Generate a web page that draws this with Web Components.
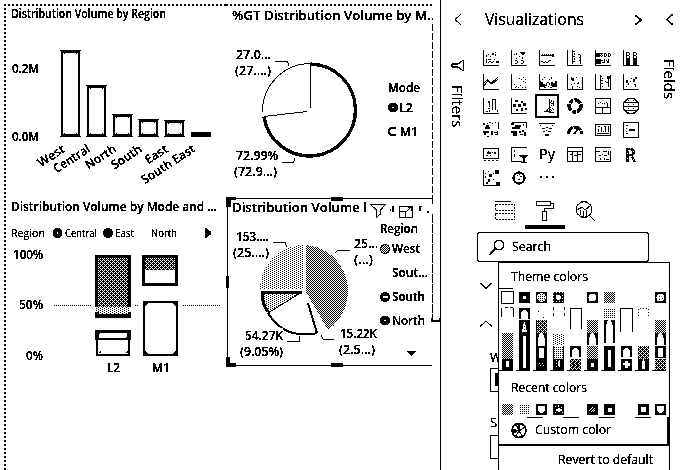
<!DOCTYPE html>
<html lang="en"><head><meta charset="utf-8"><title>Report editor</title>
<style>html,body{margin:0;width:681px;height:470px;overflow:hidden;background:#fff}</style></head>
<body><report-editor></report-editor>
<script>
const FONT = '"Open Sans","Noto Sans",sans-serif';
const T = (x, y, s, w, size = 12, weight = 600, extra = '') =>
  `<text x="${x}" y="${y}" font-size="${size}" font-weight="${weight}" ${w ? `textLength="${w}" lengthAdjust="spacingAndGlyphs"` : ''} ${extra}>${s}</text>`;
const PATTERNS = `<defs>
<pattern id="chk" width="2" height="2" patternUnits="userSpaceOnUse"><path d="M0 0h1v1H0zM1 1h1v1H1z" fill="#000"/></pattern>
<pattern id="dense" width="4" height="4" patternUnits="userSpaceOnUse"><rect width="4" height="4"/><path d="M0 0h1v1H0zM2 0h1v1H2zM1 1h1v1H1zM0 2h1v1H0zM2 2h1v1H2zM3 3h1v1H3z" fill="#fff"/></pattern>
<pattern id="lite" width="4" height="4" patternUnits="userSpaceOnUse"><path d="M0 0h1v1H0zM2 1h1v1H2zM0 2h1v1H0zM2 3h1v1H2z" fill="#000"/></pattern>
<pattern id="dots" width="2" height="2" patternUnits="userSpaceOnUse"><path d="M1 1h1v1H1z" fill="#000"/></pattern>
<pattern id="wdots" width="3" height="3" patternUnits="userSpaceOnUse"><rect width="3" height="3"/><path d="M1 1h1v1H1z" fill="#fff"/></pattern>
</defs>`;
class Base extends HTMLElement {
  constructor(){ super(); this.attachShadow({mode:'open'}); }
  connectedCallback(){ this.shadowRoot.innerHTML = `<style>*{box-sizing:border-box}svg{display:block;font-family:${FONT}}${this.css()}</style>${this.html()}`; }
  css(){ return ':host{display:block}'; }
}
class Tile extends Base {
  css(){ return ':host{display:block;overflow:hidden}'; }
  html(){ const [x,y,w,h] = this.box(); return `<svg width="${w}" height="${h}" viewBox="${x} ${y} ${w} ${h}" shape-rendering="crispEdges">${PATTERNS}${this.draw()}</svg>`; }
}
customElements.define('region-columns', class extends Tile {
  box(){ return [0,0,226,195]; }
  draw(){
    const bars = [[61,50],[87,85],[113,114],[139,119],[165,120]].map(([x,y]) => `<path d="M${x+1} ${y+1}H${x+18}V136H${x+1}z" fill="none" stroke="#000" stroke-width="2"/><path d="M${x-1} ${y}h21v1h-21zM${x-1} 136h21v1h-21zM${x+2} ${y+2}h15v1h-1v1h-1v-1h-11v1h-1v-1h-1zM${x+2} 135h15v-1h-1v-1h-1v1h-11v-1h-1v1h-1z"/>`).join('');
    const names = [['West',66,30],['Central',91,41],['North',117,34],['South',143,34],['East',169,25],['South East',196,61]]
      .map(([s,x,w]) => T(x,151,s,w,12,600,`text-anchor="end" transform="rotate(-33 ${x} 151)"`)).join('');
    return `<path d="M4 5H226" stroke="#000" stroke-width="2" stroke-dasharray="2 2"/><path d="M5 4V195" stroke="#000" stroke-width="2" stroke-dasharray="2 2"/>`
      + T(11,18,'Distribution Volume by Region',155,12) + T(12,73,'0.2M',27,12.5) + T(12,141,'0.0M',27,12.5)
      + bars + '<rect x="191" y="132" width="20" height="5"/>' + names;
  }
});
customElements.define('mode-pie', class extends Tile {
  box(){ return [226,0,214,195]; }
  draw(){ return `<clipPath id="c"><path d="M226 0h207v200h-207z"/></clipPath><path d="M226 5H432" stroke="#000" stroke-width="2" stroke-dasharray="2 2"/>
  <g clip-path="url(#c)">${T(232,20,'%GT Distribution Volume by M...',206,13)}</g>
  <path d="M432.5 24V195" stroke="#000" stroke-dasharray="7 2"/>
  <g fill="none" stroke="#000"><path d="M310.5 64A46 46 0 1 1 264 117" stroke-width="3" shape-rendering="auto"/><path d="M262.500 112A48 48 0 0 1 310 63.500"/>
  <path d="M310.500 63V108M264 116.500L307 111.500"/><path d="M275 61.500H287.500L289 66M282 162.500H293.500L295 158"/></g>`
  + T(236,59,'27.0...',35) + T(235,75,'(27....)',36) + T(236,160,'72.99%',42) + T(234,176,'(72.9...)',43)
  + T(388,92,'Mode',32,12) + T(399,112,'L2',14) + T(400,136,'M1',18)
  + '<circle cx="393" cy="107.500" r="3" fill="#fff" stroke="#000" stroke-width="4"/><path d="M396 128H391L389 130V133L391 135H396" fill="none" stroke="#000" stroke-width="1.500"/>'; }
});
customElements.define('mode-stack', class extends Tile {
  box(){ return [0,195,226,275]; }
  draw(){ return `<path d="M5 196V470" stroke="#000" stroke-width="2" stroke-dasharray="2 2"/>`
  + T(11,211,'Distribution Volume by Mode and ...',206,12.500)
  + T(11,237,'Region',34,11.500,400) + T(65,237,'Central',32,11.500,400) + T(115,237,'East',19,11.500,400) + T(151,237,'North',26,11.500,400)
  + T(13,259,'100%',30) + T(19,309,'50%',24) + T(26,360,'0%',17)
  + T(107,372,'L2',13) + T(152,372,'M1',18)
  + `<circle cx="57.500" cy="233" r="3" fill="#fff" stroke="#000" stroke-width="4"/><circle cx="108" cy="233" r="5"/><path d="M205 228h2l2 3h2v4h-2l-2 3h-2z"/>
  <path d="M54 305.500H91M135 305.500H138M183 305.500H220" stroke="#000" stroke-dasharray="1 1"/>
  <path d="M95 255H131V307H95z"/><path d="M98 258H128V307H98z" fill="url(#dense)"/><path d="M96 307H130V314H96z" fill="url(#lite)"/><path d="M95 312h4v2h29v-2h3v6H95z"/>
  <path d="M95 330H131V340H95z"/><rect x="99" y="333" width="28" height="5" rx="2" fill="#fff"/><path d="M97 340V354.500H129V340" fill="none" stroke="#000" stroke-width="2"/><path d="M98 353h3v-3zM128 353h-3l3-3z"/>
  <path d="M142 255H178V286H142z"/><path d="M145 258H175V283H145z" fill="#fff"/><path d="M145 258H175V270H145z" fill="url(#dense)"/>
  <path d="M143.500 302H176.500V354.500H143.500z" fill="none" stroke="#000" stroke-width="2"/><path d="M144 303h4l-4 4zM176 303h-4l4 4zM144 354h4l-4-4zM176 354h-4l4-4z"/>`; }
});
customElements.define('region-pie', class extends Tile {
  box(){ return [226,195,214,275]; }
  draw(){ return `<path d="M432 198.500H227.500V365.500H432" fill="none" stroke="#000"/>
  <path d="M226 197h10v3h-5v7h-5zM331 197h12v4h-12zM226 276h3v12h-3zM226 357h4v6h6v4h-10zM331 363h12v4h-12z"/>
  <path d="M432.500 195V204M432.500 214V320" fill="none" stroke="#000" stroke-dasharray="9 1"/><path d="M432 318v3h8v-3" fill="none" stroke="#000" stroke-width="2"/>`
  + T(232,212,'Distribution Volume l',135,12.500)
  + `<path d="M370.500 204.500H385.500L380.500 210V214L376.500 217V210z" fill="none" stroke="#000"/><path d="M392 206h2v6h-2zM390 209h1v2h-1z"/>
  <path d="M399.500 212V206.500H412.500V217.500H399.500V211.500H405.500V217M406 212L411 207M408 207.500H411.500V211" fill="none" stroke="#000"/><path d="M419 206h3v1h-1v4h-2zM427 211h2v2h-2z"/>
  <path d="M306 292V245A45 46.500 0 0 1 328 330z" fill="url(#chk)"/><path d="M303 289V245A43 45 0 0 0 260 289z" fill="url(#lite)"/>
  <path d="M302 292H261.500Q262 304 268 313z" fill="url(#lite)"/>
  <path d="M302 292.500H262Q262 304 268 312" fill="none" stroke="#000" stroke-width="3"/><path d="M302 292L268 313" stroke="#000"/>
  <path d="M268 313Q281 334 302 334Q311 335 317 333" fill="none" stroke="#000" stroke-width="2"/><path d="M308 303L317 333" stroke="#000" stroke-width="2"/>
  <path d="M273 242.500H285.500L286.500 247M335 252.500L338 250.500H350M287 341.500H299.500V336M321 335L323.500 339.500H334" fill="none" stroke="#000"/>`
  + T(236,241,'153....',33) + T(233,257,'(25....)',36) + T(354,248,'25...',24) + T(354,264,'(...)',19)
  + `<path d="M245 328h38v8h-38z" fill="#fff"/>` + T(245,340,'54.27K',38) + T(240,356,'(9.05%)',43) + T(340,338,'15.22K',37) + T(339,354,'(2.5...)',36)
  + T(380,233,'Region',38) + T(392,253,'West',28) + T(392,277,'Sout...',36) + T(392,301,'South',33) + T(392,325,'North',33)
  + `<circle cx="385" cy="249" r="4.500" fill="url(#chk)" stroke="#000"/><circle cx="385" cy="297" r="5"/><path d="M383 296h5v2h-5z" fill="#fff"/><circle cx="385" cy="320.500" r="3" fill="#fff" stroke="#000" stroke-width="4"/><path d="M407 351H416L411.500 356z"/>`; }
});
customElements.define('report-canvas', class extends Base {
  css(){ return ':host{display:grid;grid-template:195px 275px/226px 214px;width:441px;border-right:1px solid #000}'; }
  html(){ return '<region-columns></region-columns><mode-pie></mode-pie><mode-stack></mode-stack><region-pie></region-pie>'; }
});
/* A single-line label with a fixed advance width. */
customElements.define('fit-label', class extends Base {
  html(){ const g = n => +this.getAttribute(n); const s = this.getAttribute('size') || 13; const h = g('h') || 18;
    return `<svg width="${g('w')}" height="${h}" overflow="visible">${T(0,h-5,this.getAttribute('text'),g('w'),s,this.getAttribute('weight')||400)}</svg>`; }
});
customElements.define('ui-icon', class extends Base {
  html(){ const w=this.getAttribute('w'),h=this.getAttribute('h'); return `<svg width="${w}" height="${h}" fill="none" stroke="#000" stroke-width="${this.getAttribute('s')||1}"><path d="${this.getAttribute('d')}"/></svg>`; }
});
customElements.define('side-rail', class extends Base {
  css(){ return `:host{display:flex;flex-direction:column;align-items:center;padding-top:13px;width:33px}
  .v{writing-mode:vertical-rl;font:400 15px ${FONT};line-height:18px}ui-icon{height:13px}.gap{height:33px}`; }
  html(){ return `<ui-icon w="8" h="13" s="${this.getAttribute('s')||1}" d="M7 1L1 6.500L7 12"></ui-icon><div class="gap"></div><slot></slot><div class="v">${this.getAttribute('label')}</div>`; }
});
const AX = 'M.5 0V15.5H16';
/* Each entry: [stroked path, filled path]. */
const ICONS = [
 [AX,'M3 5h1v2H3zM5 4h1v1H5zM9 3h2v2H9zM12 4h1v2h-1zM7 6h1v1H7zM3 9h1v4H3zM5 9h3v1H5zM6 11h2v1H6zM8 12h2v1H8zM11 9h1v1h-1zM13 11h3v2h-3zM5 12h1v1H5zM12 2h1v1h-1zM10 11h1v1h-1z'],
 [AX,'M3 4h1v1H3zM5 3h1v2H5zM10 2h4v2h-4zM11 4h2v1h-2zM9 2h1v1H9zM5 8h1v1H5zM4 10h2v1H4zM6 11h1v2H6zM4 13h2v1H4zM11 7h1v2h-1zM10 10h2v1h-2zM12 11h1v2h-1zM10 13h2v1h-2zM8 6h1v1H8z'],
 [AX,'M2 5h11v1H2zM3 4h1v1H3zM5 4h1v1H5zM7 4h1v1H7zM9 4h1v1H9zM11 4h1v1h-1zM13 4h2v3h-2zM2 11h2v1H2zM4 12h2v1H4zM6 11h1v1H6zM7 12h2v1H7zM9 11h1v1H9zM10 10h2v1h-2z'],
 [AX,'M5 0h1v14H5zM6 1h2v1H6zM7 3h1v2H7zM6 6h2v1H6zM7 8h1v2H7zM6 11h2v1H6zM13 5h1v9h-1zM11 4h2v1h-2zM12 7h1v1h-1zM12 10h1v1h-1z'],
 ['M.5 0V15.5H16','M1 3h4v4H1zM6 4h1v1H6zM5 5h1v1H5zM7 5h1v1H7zM6 6h1v1H6zM5 3h3v1H5zM9 3h1v4H9zM9 3h2v1H9zM11 4h1v2h-1zM9 6h2v1H9zM13 3h1v4h-1zM13 3h2v1h-2zM14 6h1v1h-1zM15 4h1v2h-1zM1 9h5v5H1zM6 10h2v1H6zM7 12h2v1H7zM9 9h1v4H9zM11 10h1v1h-1zM12 11h1v2h-1zM13 9h1v4h-1z'],
 [AX,'M3 8h4v7H3zM10 8h4v7h-4zM3 2h3v1H3zM3 3h1v5H3zM6 3h1v2H6zM4 5h2v1H4zM6 6h1v2H6zM10 2h3v1h-3zM10 3h1v5h-1zM13 3h1v2h-1zM11 5h2v1h-2zM13 6h1v2h-1z'],
 ['M.5 0V15.5H16M1 12L5 6.500L8 9.500L15 3M1 9L5 5M9 10L15 5',''],
 [AX,'M8 4h1v1H8zM10 5h1v1h-1zM12 3h1v1h-1zM14 5h1v1h-1zM12 7h1v1h-1zM14 8h1v1h-1zM3 10h1v1H3zM5 12h1v1H5zM7 13h1v1H7zM9 11h1v1H9zM11 13h1v1h-1zM14 13h1v1h-1zM4 13h1v1H4z'],
 ['M.5 0V15.5H18','M0 7h2v1h2v2h2v1h2v1H6v1H0zM3 5h1v1H3zM5 3h1v1H5zM12 3h1v2h-1zM10 5h1v1h-1zM8 8h2v1H8zM7 9h1v2H7zM10 9h1v2h-1zM12 8h2v1h2v-2h2v6h-5v-1h-1zM5 13h2v1H5zM9 12h1v1H9zM11 13h2v1h-2z'],
 ['M.5 0V15.500H15.500V3','M4 3h1v3H4zM5 4h2v3H5zM9 3h1v1H9zM11 8h1v1h-1zM10 9h2v1h-2zM4 10h1v1H4zM5 12h1v3H5zM10 12h1v1h-1zM12 13h1v1h-1zM7 9h1v1H7z'],
 ['M.5 0V15.500H15.500V1','M5 1h1v14H5zM6 2h1v1H6zM7 4h1v1H7zM6 6h2v1H6zM6 9h2v1H6zM7 12h1v1H7zM10 7h1v1h-1zM11 8h2v1h-2zM13 5h1v8h-1zM12 2h3v3h-3z'],
 [AX,'M3 6h2v3H3zM5 9h1v2H5zM7 7h1v1H7zM8 4h1v1H8zM10 5h2v3h-2zM12 3h2v2h-2zM11 10h2v1h-2zM12 11h1v2h-1zM3 12h1v1H3z'],
 [AX,'M5 3h2v2H5zM6 5h1v4H6zM9 1h4v1H9zM9 2h1v10H9zM12 2h1v10h-1zM5 10h2v1H5zM3 13h2v1H3zM6 12h1v2H6zM14 12h1v2h-1z'],
 [AX,'M4 2h3v2H4zM10 3h2v2h-2zM12 5h3v3h-3zM2 6h3v3H2zM7 6h3v3H7zM5 11h2v2H5zM10 10h2v3h-2zM14 10h2v2h-2z'],
 ['','M10 1h1v14h-1zM12 2h1v2h-1zM11 4h1v1h-1zM13 5h1v1h-1zM12 7h1v1h-1zM11 9h1v1h-1zM13 10h1v1h-1zM12 12h1v1h-1zM14 11h1v1h-1zM8 11h1v2H8zM5 13h7v1H5zM9 10h1v1H9zM14 3h1v5h-1zM12 5h1v1h-1zM11 11h1v1h-1zM7 12h1v1H7zM11 14h4v1h-4z'],
 ['DONUT',''],
 ['M.5.5H15.500V15.500H.5zM0 9.500H16M7.500 9V16','M3 5h1v1H3zM5 4h1v1H5zM7 5h1v1H7zM9 5h1v1H9zM11 4h1v1h-1zM12 5h1v4h-1z'],
 ['M5 .5H11L15.500 5V11L11 15.500H5L.5 11V5zM2 4.500H14M1 8.500H15M2 12.500H14','M5 2h1v1H5zM5 6h1v1H5zM5 10h1v1H5zM10 2h1v1h-1zM10 6h1v1h-1zM10 10h1v1h-1zM5 14h1v1H5zM10 14h1v1h-1z'],
 ['M15.500 0V7','M0 1h2v2H0zM4 1h1v1H4zM6 0h2v1H6zM9 1h1v1H9zM12 0h1v1h-1zM2 5h5v2H2zM3 3h3v2H3zM0 9h6v2H0zM1 11h2v2H1zM8 9h2v4H8zM11 10h3v1h-3zM12 12h3v1h-3zM14 9h1v3h-1zM4 14h2v1H4z'],
 ['M1 .5H16M15.500 0V6','M0 1h3v2H0zM4 3h6v2H4zM1 5h8v2H1zM0 9h6v2H0zM2 11h4v3H2zM8 9h2v2H8zM11 8h2v2h-2zM13 10h2v4h-2zM9 12h3v1H9zM12 2h1v2h-1z'],
 ['M0 1.500H16','M1 3h1v1H1zM13 3h1v1h-1zM3 6h3v1H3zM7 5h2v1H7zM10 6h3v1h-3zM4 9h2v1H4zM7 8h1v1H7zM9 9h3v1H9zM6 12h4v2H6z'],
 ['GAUGE',''],
 ['M.5 2V13.500H15.500V2z','M3 4h2v1H3zM3 7h1v3H3zM6 5h1v5H6zM8 9h1v1H8zM9 4h2v1H9zM10 5h1v5h-1zM13 4h1v6h-1zM2 11h12v1H2z'],
 ['M.5.5H15.500V15.500H.5zM3 3.500h2M3 11.500h2','M6 7h6v2H6zM3 6h1v1H3zM3 9h1v1H3z'],
 ['M.5 2.500H15.500V12.500H.5z','M4 6h4v2H4zM5 5h1v1H5zM9 6h1v1H9zM11 6h2v2h-2zM3 9h2v1H3zM7 9h1v1H7zM1 14h2v1H1zM5 14h2v1H5zM9 14h2v1H9zM13 14h2v1h-2z'],
 ['M.5.5V15.500H11M0 1H16','M3 4h1v2H3zM3 8h1v3H3zM7 9h10v1h-1l-2 2v4h2v1h-6v-1h2v-4l-2-1z'],
 ['PY',''],
 ['M.5.5V15.500H15.500V1M0 1H16M1 5.500H15M5.500 6V15M10.500 6V15','M3 8h2v1H3zM7 9h3v1H7zM11 8h3v1h-3z'],
 ['M.5.5V15.500H15.500V5M0 1H16M1 5.500H5','M8 5h4v1H8zM13 5h1v4h-1zM4 9h2v1H4zM7 8h1v1H7zM9 9h3v1H9zM5 12h1v2H5zM9 12h1v2H9zM11 13h3v1h-3z'],
 ['RR',''],
 ['M.5 0V15.500H13','M2 3h1v1H2zM2 6h1v2H2zM5 1h1v1H5zM12 0h4v4h-4zM6 4h3v3H6zM5 9h2v3H5zM13 12h4v4h-4zM3 12h2v2H3zM10 3h1v1h-1zM10 9h1v1h-1z'],
 ['RING',''],['MORE','']];
const special = {
 DONUT:'<circle cx="8" cy="8" r="6" fill="none" stroke="#000" stroke-width="3.500" stroke-dasharray="7 1 4 1.500"/>',
 GAUGE:'<path d="M1.500 12A6.500 7 0 0 1 14.500 12" fill="none" stroke="#000" stroke-width="3" stroke-dasharray="8 1"/><path d="M7 12L11 7" stroke="#000" stroke-width="2"/>',
 PY:T(0,13,'Py',16,15,400), RR:T(2,16,'R',11,20,600)+'<path d="M5 4h1v1H5zM4 7h1v1H4zM7 2h1v1H7zM10 5h1v1h-1zM8 10h1v1H8zM4 12h1v1H4zM10 13h1v1h-1z" fill="#fff"/>',
 RING:'<circle cx="8" cy="8" r="5.500" fill="none" stroke="#000" stroke-width="2"/><path d="M6 5h1v1H6zM9 6h2v1H9zM7 9h2v1H7zM8 4h1v1H8zM1 7h1v2H1zM14 7h1v2h-1zM7 1h2v1H7zM7 14h2v1H7z"/>',
 MORE:'<path d="M1 6h2v2H1zM7 6h2v2H7zM13 6h2v2h-2z"/>'};
customElements.define('visual-gallery', class extends Base {
  css(){ return ':host{display:grid;grid-template-columns:repeat(6,16px);grid-auto-rows:16px;gap:8px 12px}.sel{outline:2px solid #000;outline-offset:2px}svg{overflow:visible}'; }
  html(){ return ICONS.map(([s,f],i) => `<svg width="16" height="16" class="${i===14?'sel':''}" shape-rendering="crispEdges">${special[s] || `<path d="${s}" fill="none" stroke="#000"/><path d="${f}"/>`}</svg>`).join(''); }
});
customElements.define('pane-tabs', class extends Base {
  css(){ return ':host{display:grid;grid-template-columns:40px 40px 40px;height:31px}div{display:flex;justify-content:center;padding-top:3px}.on{border-bottom:4px solid #000}'; }
  html(){ return `<div><svg width="20" height="20" fill="none" stroke="#000" shape-rendering="crispEdges"><path d="M0 .5H16"/><path d="M.5 3.500H19.500V9.500H.5zM.5 12.500H19.500V18.500H.5z" stroke-dasharray="2 1"/></svg></div>
  <div class="on"><svg width="19" height="21" fill="none" stroke="#000" shape-rendering="crispEdges"><path d="M.5.500H14.500V4.500H.500zM15 2.500H17.500V7.500H8.500V10M6.500 10.500H10.500V19.500H6.500z"/></svg></div>
  <div><svg width="21" height="21" fill="none" stroke="#000"><circle cx="9" cy="8.500" r="7.800"/><path d="M2 9L7 6L10 9L16 4M5.500 9V14M8.500 10V16M11.500 9V15M14 14L20 20"/></svg></div>`; }
});
const F = {c:'url(#chk)',d:'url(#dense)',l:'url(#lite)',o:'url(#dots)',w:'url(#wdots)'};
customElements.define('theme-swatches', class extends Base {
  html(){
    const r=(x,y,w,h,f)=>`<rect x="${x}" y="${y}" width="${w}" height="${h}" fill="${f}"/>`;
    let s='';
    s+='<path d="M.5.500h12v12H.500z" fill="none" stroke="#000"/>';
    const ring=(i,k)=>{ s+=r(i*17+1,1,11,11,'#000')+k; };
    ring(1,r(22,5,3,3,'#fff')); ring(2,'<circle cx="40.500" cy="6.500" r="4.500" fill="#fff"/><circle cx="40.500" cy="6.500" r="4" fill="url(#dots)"/>');
    ring(3,r(52,1,11,11,'url(#wdots)')+'<circle cx="57.500" cy="6.500" r="2.500" fill="#fff"/>'); ring(5,'<circle cx="91.500" cy="6.500" r="4" fill="#fff"/>');
    s+=r(103,1,11,11,F.c)+'<path d="M105 11L113 3M104 8L110 2" stroke="#fff"/>'; ring(9,'<circle cx="159.500" cy="6.500" r="4" fill="#fff"/><path d="M158 5h1v1h-1zM161 7h1v1h-1zM158 8h1v1h-1z"/>');
    const arch=(x,y,h)=>r(x,y,11,h,'#000')+`<path d="M${x+2} ${y+h}V${y+5}L${x+4} ${y+2}H${x+7}L${x+9} ${y+5}V${y+h}z" fill="#fff"/>`;
    const sides=(x,y,h)=>r(x,y,2,h,'#000')+r(x+9,y,2,h,'#000')+`<path d="M${x+2} ${y}h2l-2 6zM${x+9} ${y}h-2l2 6z"/>`;
    const hole=(x,y,h,w=4)=>r(x,y,11,h,'#000')+`<rect x="${x+5.5-w/2}" y="${y+2}" width="${w}" height="${h-3}" rx="1.500" fill="#fff"/>`;
    s+='<g transform="translate(0 -1)">';
    s+=`<path d="M.5 27V18M12.500 27V18M4 17.500h3M9 17.500h3" stroke="#000"/>`+r(1,43,11,12,F.c)+r(1,55,11,14,F.c)+r(1,69,11,12,'#000')+'<path d="M4 69h5v7L6.500 79L4 76z" fill="url(#lite)"/><path d="M5 71h3v6H5z" fill="#fff"/>';
    s+=arch(18,18,11)+r(18,30,11,51,'#000')+'<path d="M21 42L23 32h1L26 42z" fill="#fff"/><path d="M23 36h1v1h-1zM23 39h1v1h-1z"/>'+r(22,46,3,32,'#fff');
    s+='<path d="M37 21h1v1h-1zM42 27h1v1h-1z"/>'+r(35,30,11,13,F.d)+r(35,30,1,13,'#000')+sides(35,43,13)+hole(35,56,13,5)+r(35,69,11,12,'#000')+'<circle cx="40.500" cy="74.500" r="4" fill="url(#chk)"/><path d="M38 73h1v1h-1zM41 73h1v1h-1zM39 75h1v1h-1zM42 75h1v1h-1z" fill="#fff"/>';
    s+='<path d="M52.500 17v3M52.500 23v3M63.500 17v3M63.500 23v3" stroke="#000"/>'+r(52,44,11,11,F.l)+r(52,56,11,13,F.o)+r(52,56,1,13,'#000')+r(62,56,1,13,'#000')+r(52,69,11,12,'#000')+r(55,69,5,9,F.w)+r(57,71,2,5,'#fff');
    s+='<path d="M69.500 39V18.500H80.500V39" fill="none" stroke="#000"/>'+arch(69,56,11)+r(69,69,11,12,F.d)+r(71,71,6,6,F.l);
    s+=r(86,30,11,13,F.c)+sides(86,43,12)+r(86,56,11,13,F.c)+r(86,69,11,12,'#000')+r(90,73,3,4,'#fff');
    s+=r(103,18,11,11,F.o)+sides(103,30,23)+r(103,56,11,25,'#000')+r(107,60,3,17,'#fff');
    s+='<path d="M119.500 42V18.500H131.500V42" fill="none" stroke="#000"/>'+arch(120,56,11)+r(120,69,11,12,'#000')+'<path d="M124 71h3v2h2v3h-2v2h-3v-3h-2v-2h2z" fill="#fff"/>';
    s+='<path d="M137.500 26V18.500H147.500V26" fill="none" stroke="#000" stroke-dasharray="1 2"/>'+r(137,56,11,13,F.d)+r(137,69,11,12,'#000')+'<path d="M141 79V72L142.500 69L144 72V79z" fill="#fff"/>';
    s+=r(154,30,11,13,F.c)+sides(154,43,12)+hole(154,56,12,5)+r(154,69,11,12,F.d)+'</g>';
    return `<svg width="166" height="82" shape-rendering="crispEdges">${PATTERNS}${s}</svg>`; }
});
customElements.define('recent-swatches', class extends Base {
  html(){ const b=(i,inner)=>`<rect x="${i*17+1}" width="11" height="11"/>${inner}`;
    return `<svg width="166" height="11" shape-rendering="crispEdges">${PATTERNS}<rect x="1" width="11" height="11" fill="url(#chk)"/><rect x="18" width="10" height="11" fill="url(#dots)"/>
    ${b(2,'<path d="M37 2h7v4l-2 3h-3l-2-3z" fill="#fff"/>')}${b(3,'<path d="M54 2h1v1h-1zM57 1h1v2h-1zM60 3h1v1h-1zM55 5h6v2h-6zM57 4h2v4h-2zM54 8h1v1h-1zM61 8h1v1h-1z" fill="#fff"/>')}${b(5,'<path d="M88 7l4-4M90 8l4-4M92 8l2-2" stroke="#fff"/>')}${b(6,'<path d="M107 4h4v4h-4z" fill="#fff"/>')}${b(8,'<circle cx="142.500" cy="5.500" r="2.800" fill="#fff"/>')}${b(9,'<path d="M156 2h7v4l-2 3h-3l-2-3z" fill="#fff"/>')}</svg>`; }
});
customElements.define('color-menu', class extends Base {
  css(){ return `:host{display:flex;flex-direction:column;background:#fff;border:1px solid #000;border-bottom:0;width:172px;height:208px}
  .head{padding:4px 0 0 12px;height:25px}.dash{height:1px;width:14px;background:#000}.sw{padding:2px 0 0 2px;height:81px}
  .recent{padding:7px 0 0 12px;height:34px;background:repeating-linear-gradient(90deg,#000 0 14px,#fff 14px 17px) 0 0/100% 1px no-repeat}
  .row{height:12px;padding-left:2px}
  .custom{display:flex;align-items:center;gap:8px;margin-top:1px;padding-left:12px;height:29px;border-bottom:2px solid #000;border-right:2px solid #000;background:repeating-linear-gradient(90deg,#000 0 16px,#fff 16px 36px) 28px 0/100% 1px no-repeat}
  .revert{display:flex;justify-content:flex-end;padding:5px 16px 0 0}`; }
  html(){ return `<div class="head"><fit-label text="Theme colors" w="77" h="19"></fit-label></div><div class="dash"></div><div class="sw"><theme-swatches></theme-swatches></div>
  <div class="recent"><fit-label text="Recent colors" w="76" h="20"></fit-label></div><div class="row"><recent-swatches></recent-swatches></div>
  <div class="custom"><svg width="16" height="17" fill="none" stroke="#000"><circle cx="8" cy="8.500" r="7" stroke-width="1.300"/><path d="M8 9L5 2M8 9L14 5M8 9L12 15M8 9L4 15M8 9L1 7M8 9L8 2"/><circle cx="3.500" cy="9" r="1.500" fill="#000"/></svg><fit-label text="Custom color" w="76" h="17"></fit-label></div>
  <div class="revert"><fit-label text="Revert to default" w="95"></fit-label></div>`; }
});
customElements.define('format-form', class extends Base {
  css(){ return `:host{display:block;position:relative;padding-top:21px}color-menu{position:absolute;left:24px;top:0}
  .c{display:flex;flex-direction:column;padding-left:6px;height:187px;gap:30px}.f{display:grid;justify-items:start;padding-left:10px;gap:4px;grid-template-rows:15px 24px}
  .b{width:40px;height:24px;border:1px solid #000;padding:4px}.b i{display:block;width:3px;height:13px;background:#000}.form{display:flex;flex-direction:column;gap:13px;margin-top:-8px}.f+.f{margin-top:11px}`; }
  html(){ return `<div class="c"><ui-icon w="12" h="7" s="1.200" d="M0 0L6 6L12 0"></ui-icon><ui-icon w="12" h="7" s=".9" d="M0 6.500L6 1L12 6.500"></ui-icon>
  <div class="form"><div class="f"><fit-label text="Width" w="34" h="18"></fit-label><div class="b"><i></i></div></div><div class="f"><fit-label text="Size" w="24" h="16"></fit-label><div class="b"></div></div></div></div><color-menu></color-menu>`; }
});
customElements.define('visualizations-pane', class extends Base {
  css(){ return `:host{display:flex;flex-direction:column;width:188px}.h{display:flex;justify-content:space-between;padding:9px 20px 0 11px;height:50px}.h ui-icon{padding-top:5px}
  .g{padding-left:9px;height:148px}.t{padding-left:11px;height:34px}.s{display:flex;align-items:center;gap:7px;margin-left:3px;width:172px;height:30px;border:1px solid #000;border-radius:2px;padding-left:11px}`; }
  html(){ return `<div class="h"><fit-label text="Visualizations" w="99" h="21" size="16"></fit-label><ui-icon w="8" h="13" s="1.600" d="M1 1L7 6L1 11"></ui-icon></div>
  <div class="g"><visual-gallery></visual-gallery></div><div class="t"><pane-tabs></pane-tabs></div>
  <div class="s"><svg width="16" height="17" fill="none" stroke="#000" stroke-width="1.200"><circle cx="10" cy="6" r="4.700"/><path d="M6.500 9.500L0 16"/></svg><fit-label text="Search" w="39" h="17"></fit-label></div><format-form></format-form>`; }
});
customElements.define('report-editor', class extends Base {
  css(){ return `:host{display:block}.app{display:flex;width:681px;height:470px;overflow:hidden;background:#fff;color:#000;filter:url(#ink)}side-rail{flex:none}.last{width:16px}.def{position:absolute}`; }
  html(){ return `<svg class="def" width="0" height="0"><filter id="ink" x="0" y="0" width="1" height="1" color-interpolation-filters="sRGB"><feColorMatrix type="saturate" values="0"/><feComponentTransfer><feFuncR type="discrete" tableValues="0 0 0 0 0 0 0 1 1 1"/><feFuncG type="discrete" tableValues="0 0 0 0 0 0 0 1 1 1"/><feFuncB type="discrete" tableValues="0 0 0 0 0 0 0 1 1 1"/></feComponentTransfer></filter></svg>
  <div class="app"><report-canvas></report-canvas><side-rail label="Filters"><ui-icon w="14" h="13" d="M12.500 1V12L7 8H1V5H7z" style="height:26px"></ui-icon></side-rail><visualizations-pane></visualizations-pane><side-rail label="Fields" s="1.300" class="last"></side-rail></div>`; }
});
</script></body></html>
